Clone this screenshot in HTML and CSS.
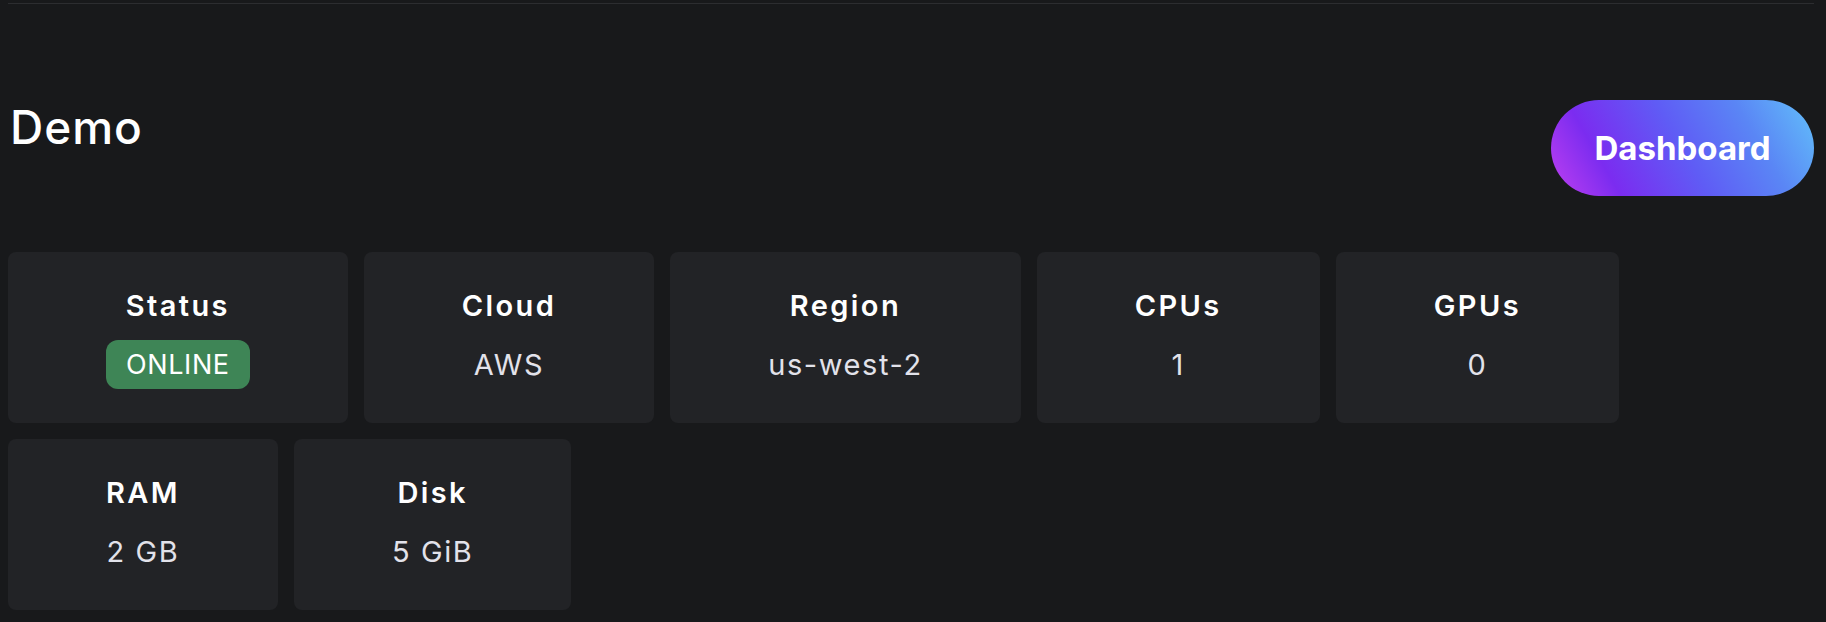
FILE: index.html
```html
<!DOCTYPE html>
<html>
<head>
<meta charset="utf-8">
<link rel="stylesheet" href="styles.css">
</head>
<body>
<div class="page">
  <div class="rule"></div>
  <div class="header">
    <h1 class="title">Demo</h1>
    <button class="dash-btn">Dashboard</button>
  </div>
  <div class="cards">
    <div class="card"><div class="label">Status</div><div class="value"><span class="badge">ONLINE</span></div></div>
    <div class="card"><div class="label">Cloud</div><div class="value">AWS</div></div>
    <div class="card"><div class="label">Region</div><div class="value">us-west-2</div></div>
    <div class="card"><div class="label">CPUs</div><div class="value">1</div></div>
    <div class="card"><div class="label">GPUs</div><div class="value">0</div></div>
    <div class="card"><div class="label">RAM</div><div class="value">2 GB</div></div>
    <div class="card"><div class="label">Disk</div><div class="value">5 GiB</div></div>
  </div>
</div>
</body>
</html>
```

FILE: styles.css
```css
html, body {
  margin: 0;
  padding: 0;
  background: #18191b;
  font-family: Inter, "Noto Sans", sans-serif;
  color: #ffffff;
}
.page {
  padding: 3px 12px 0 8px;
}
.rule {
  height: 1px;
  background: #2c2d30;
}
.header {
  display: flex;
  justify-content: space-between;
  align-items: flex-start;
  margin-top: 96px;
}
.title {
  margin: 0;
  font-size: 46px;
  line-height: 54px;
  font-weight: 500;
  letter-spacing: 1px;
  padding-left: 2px;
}
.dash-btn {
  width: 263px;
  height: 96px;
  border: none;
  border-radius: 48px;
  color: #fff;
  font-family: inherit;
  font-size: 33px;
  font-weight: 700;
  background: linear-gradient(60deg, #c040f0 0%, #7b2cf0 22%, #5f5cf5 50%, #5a86f5 75%, #62c0fa 100%);
}
.cards {
  display: flex;
  flex-wrap: wrap;
  gap: 16px 16px;
  margin-top: 56px;
  width: 1620px;
}
.card {
  background: #222326;
  border-radius: 8px;
  padding: 36px 98px 34px;
  display: flex;
  flex-direction: column;
  align-items: center;
}
.label {
  font-size: 29px;
  line-height: 35px;
  font-weight: 600;
  letter-spacing: 2.4px;
  color: #ffffff;
}
.value {
  margin-top: 17px;
  height: 49px;
  display: flex;
  align-items: center;
  font-size: 29px;
  font-weight: 400;
  letter-spacing: 1.6px;
  color: #e2e2ea;
}
.badge {
  background: #3e8556;
  color: #ffffff;
  border-radius: 12px;
  height: 49px;
  padding: 0 20px;
  display: flex;
  align-items: center;
  font-size: 27px;
  letter-spacing: 0.6px;
}
```
